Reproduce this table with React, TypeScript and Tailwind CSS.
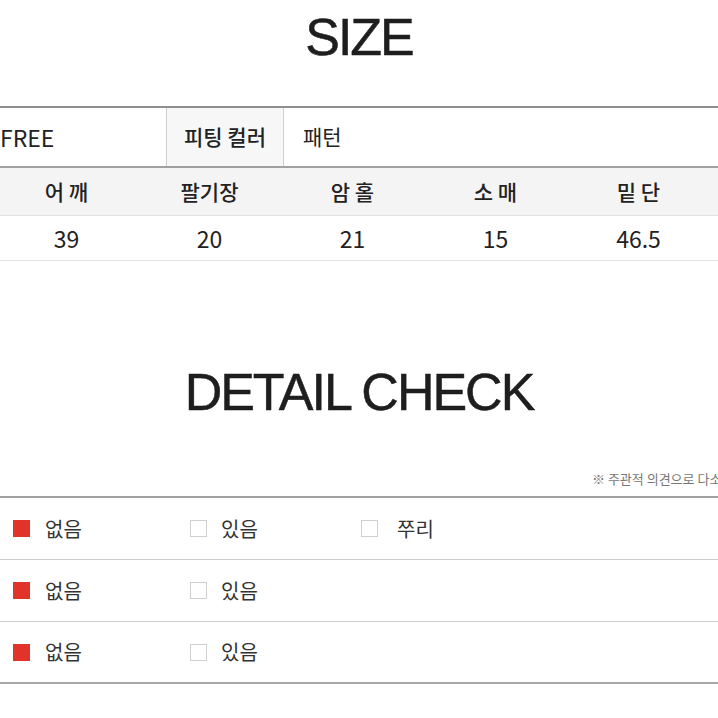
import React from 'react';

const kr = { fontFamily: '"Noto Sans CJK KR", "Noto Sans", sans-serif' };
const title = { fontFamily: '"Liberation Sans", Arial, sans-serif' };

const headers = ['어 깨', '팔기장', '암 홀', '소 매', '밑 단'];
const values = ['39', '20', '21', '15', '46.5'];

type Opt = { label: string; checked: boolean };

const rows: Opt[][] = [
  [
    { label: '없음', checked: true },
    { label: '있음', checked: false },
    { label: '쭈리', checked: false },
  ],
  [
    { label: '없음', checked: true },
    { label: '있음', checked: false },
  ],
  [
    { label: '없음', checked: true },
    { label: '있음', checked: false },
  ],
];

const Box: React.FC<{ checked: boolean }> = ({ checked }) =>
  checked ? (
    <span className="block h-[17px] w-[17px] shrink-0 bg-[#e2332a]" />
  ) : (
    <span className="block h-[17px] w-[17px] shrink-0 border border-[#cfcfcf] bg-white" />
  );

export default function App() {
  return (
    <div className="w-[718px] h-[718px] overflow-hidden bg-white text-[#222]" style={kr}>
      {/* SIZE */}
      <div className="h-[106px] pt-[11px] text-center">
        <h1
          className="text-[52px] leading-none tracking-[-2px] text-[#1e1e1e] [-webkit-text-stroke:0.5px_#1e1e1e]"
          style={title}
        >
          SIZE
        </h1>
      </div>

      <div className="border-t-2 border-[#8e8e8e]">
        <div className="flex h-[60px] items-center border-b-2 border-[#a0a0a0] text-[21px]">
          <div className="flex h-full w-[166px] items-center text-[23px]">FREE</div>
          <div className="flex h-full w-[118px] items-center justify-center border-x border-[#cfcfcf] bg-[#f7f7f7] font-medium">
            피팅 컬러
          </div>
          <div className="flex h-full items-center pl-[19px]">패턴</div>
        </div>

        <div className="-ml-[5px] grid h-[48px] grid-cols-[143px_143px_143px_143px_143px] items-center border-b border-[#e2e2e2] bg-[#f4f4f4] text-[21px] font-medium">
          {headers.map(h => (
            <div key={h} className="text-center">{h}</div>
          ))}
        </div>

        <div className="-ml-[5px] grid h-[45px] grid-cols-[143px_143px_143px_143px_143px] items-center border-b border-[#e4e4e4] text-[23px]">
          {values.map(v => (
            <div key={v} className="text-center">{v}</div>
          ))}
        </div>
      </div>

      {/* DETAIL CHECK */}
      <div className="pt-[105px] text-center">
        <h2
          className="text-[52px] leading-none tracking-[-2px] text-[#1e1e1e] [-webkit-text-stroke:0.5px_#1e1e1e]"
          style={title}
        >
          DETAIL CHECK
        </h2>
      </div>

      <div className="mt-[51px] flex h-[20px] items-center overflow-hidden whitespace-nowrap pl-[592px] text-[13px] text-[#777]">
        ※ 주관적 의견으로 다소 차이가 있을 수 있습니다.
      </div>

      <div className="mt-[7px] border-t-2 border-[#a0a0a0]">
        {rows.map((r, i) => (
          <div
            key={i}
            className={`flex h-[62px] items-center pl-[13px] text-[20px] text-[#333] ${
              i === rows.length - 1 ? 'border-b-2 border-[#a8a8a8]' : 'border-b border-[#cdcdcd]'
            }`}
          >
            {r.map((o, j) => (
              <div
                key={j}
                className={`flex items-center ${j === 0 ? 'w-[177px] gap-[15px]' : j === 1 ? 'w-[171px] gap-[14px]' : 'gap-[19px]'}`}
              >
                <Box checked={o.checked} />
                <span>{o.label}</span>
              </div>
            ))}
          </div>
        ))}
      </div>
    </div>
  );
}
